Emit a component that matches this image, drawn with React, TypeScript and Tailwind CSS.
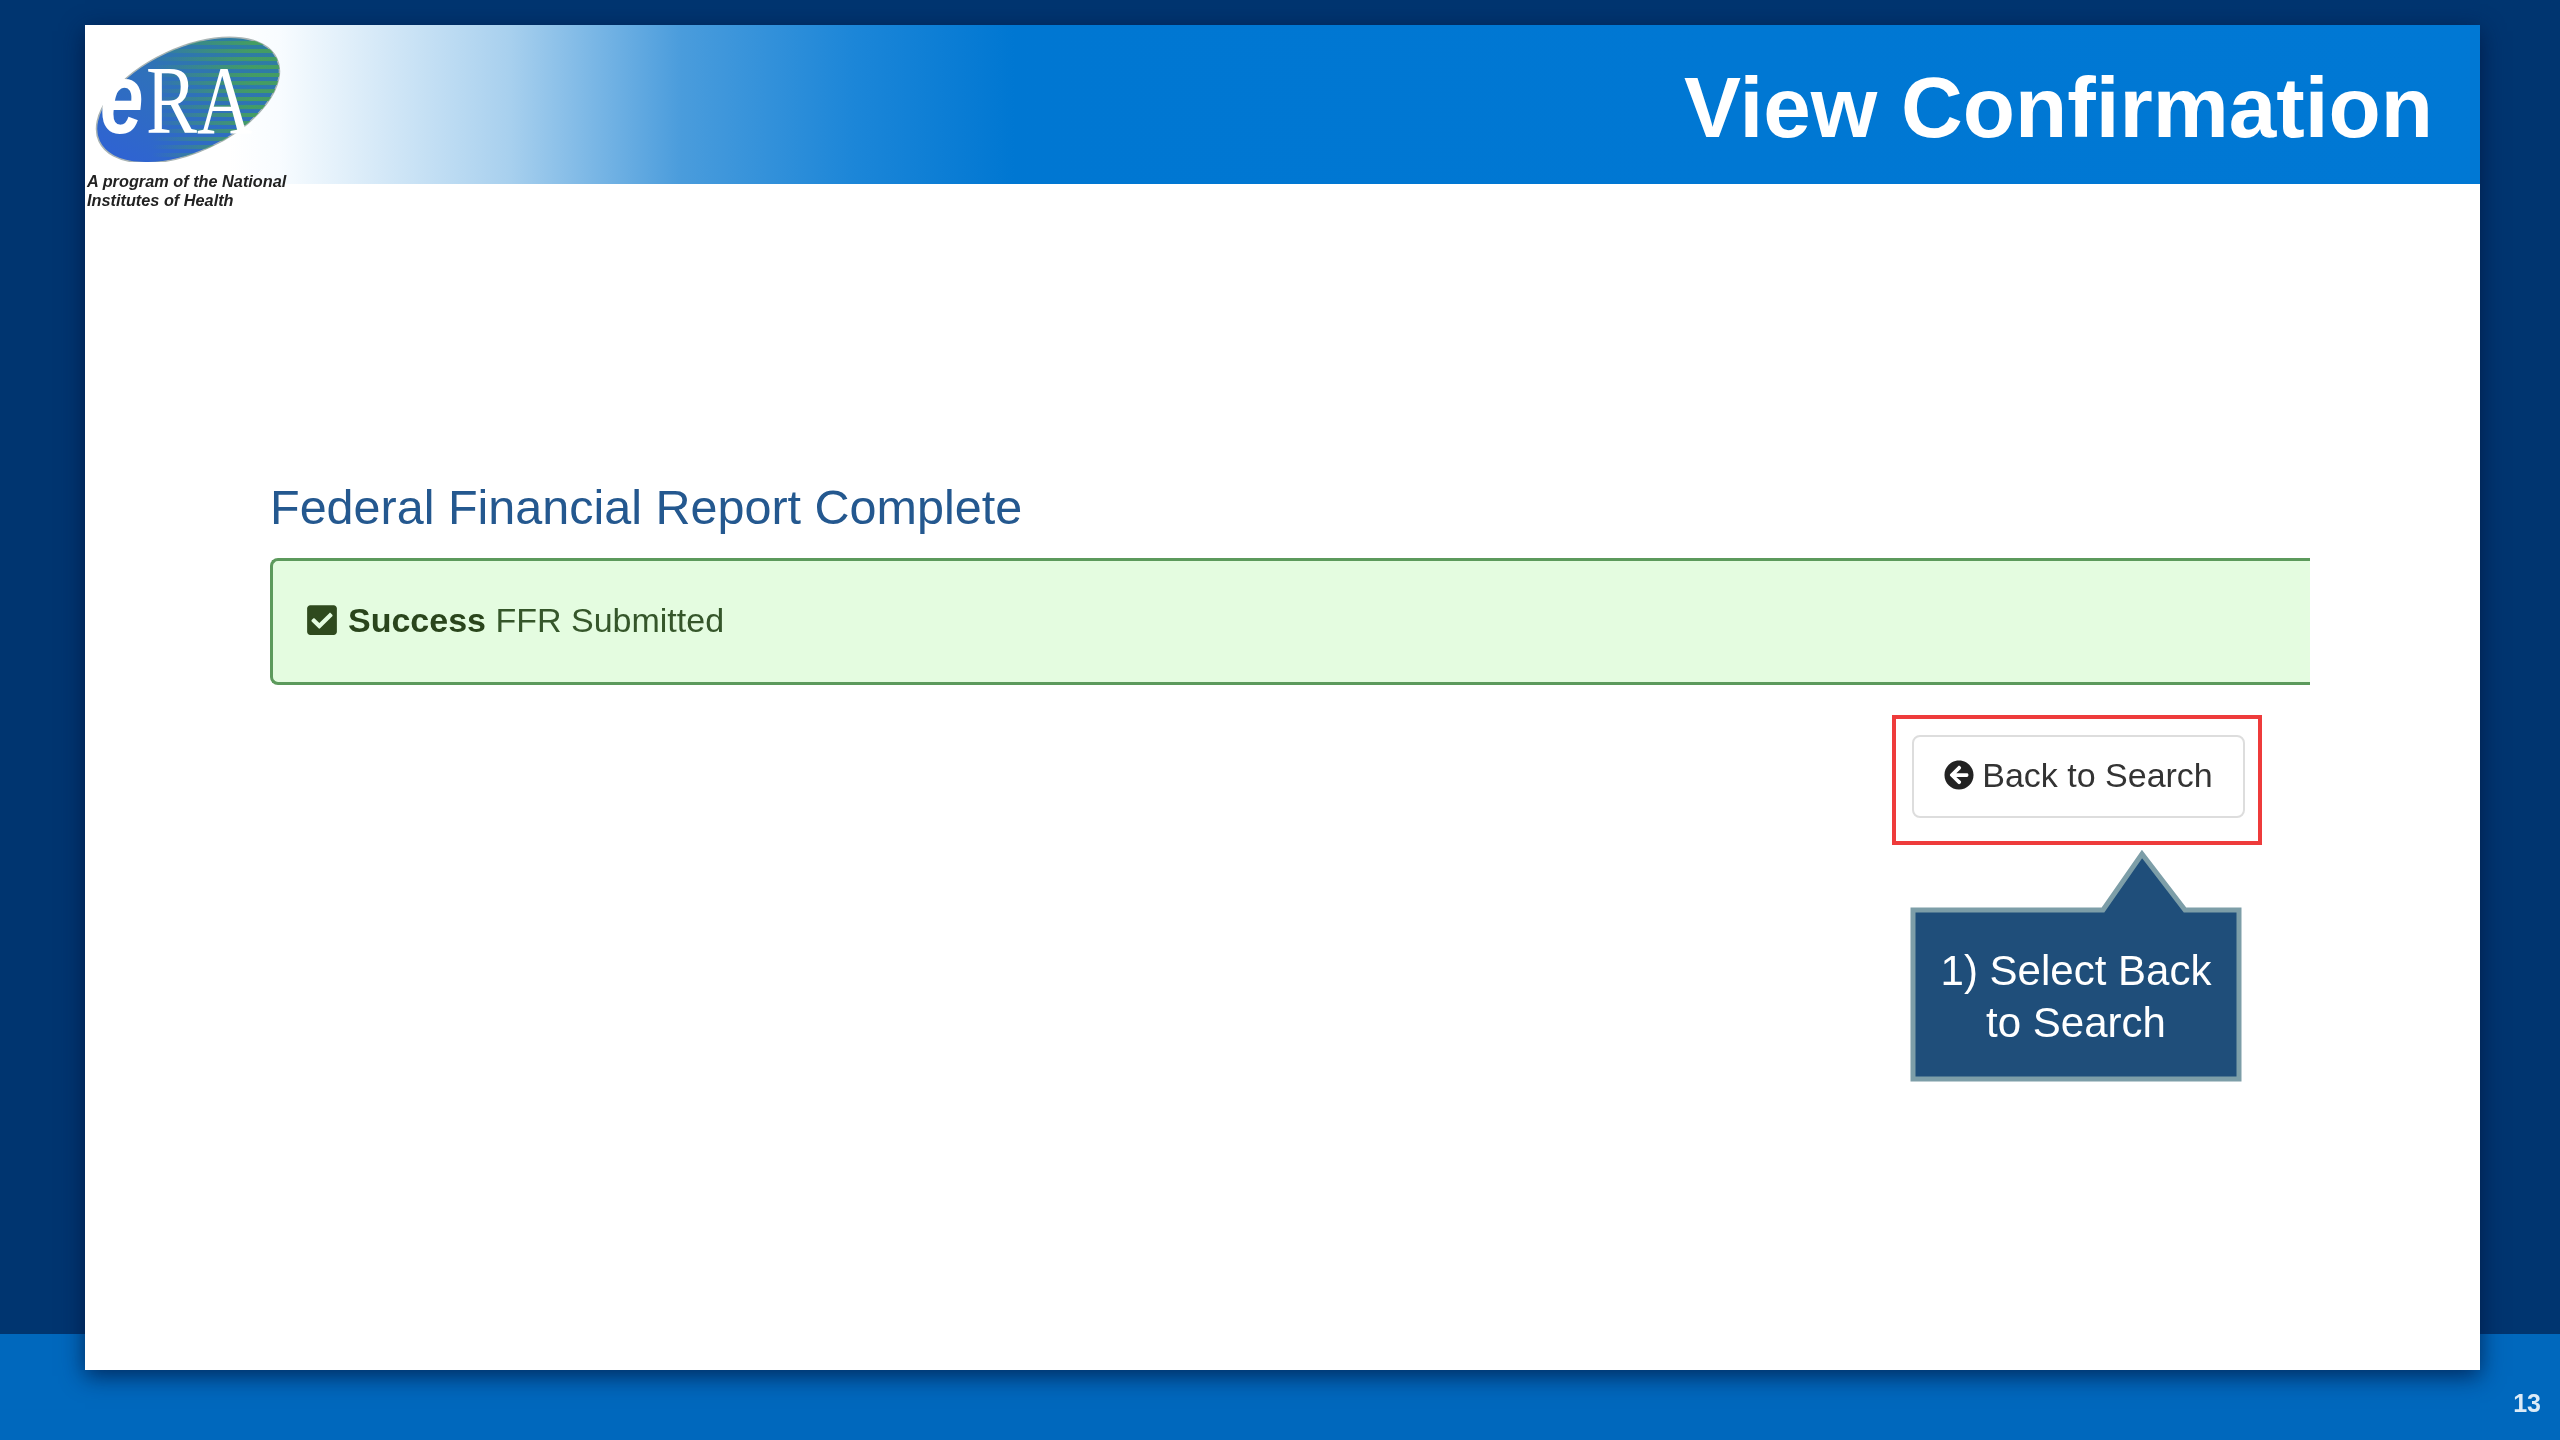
import { FaArrowCircleLeft, FaCheckSquare } from "react-icons/fa";

const stripes = Array.from({ length: 16 }, (_, i) => 14 + i * 8);

function EraLogo() {
    return (
        <svg width="200" height="135" viewBox="0 0 200 135" className="block">
            <defs>
                <linearGradient id="era-fill" x1="0" y1="0.7" x2="1" y2="0.3">
                    <stop offset="0" stopColor="#2f62d4" />
                    <stop offset="0.5" stopColor="#2f70bc" />
                    <stop offset="1" stopColor="#2f7f9c" />
                </linearGradient>
                <linearGradient id="era-stripe" gradientUnits="userSpaceOnUse" x1="60" y1="0" x2="160" y2="0">
                    <stop offset="0" stopColor="#46a05c" stopOpacity="0" />
                    <stop offset="1" stopColor="#46a05c" stopOpacity="0.9" />
                </linearGradient>
                <clipPath id="era-clip">
                    <ellipse cx="96" cy="73" rx="98" ry="52" transform="rotate(-25 96 73)" />
                </clipPath>
            </defs>
            <ellipse cx="96" cy="73" rx="98" ry="52" transform="rotate(-25 96 73)" fill="url(#era-fill)" stroke="#a9b4b4" strokeWidth="1.5" />
            <g clipPath="url(#era-clip)">
                {stripes.map((y) => (
                    <rect key={y} x="0" y={y} width="200" height="4" fill="url(#era-stripe)" />
                ))}
            </g>
            <text transform="translate(8 106) scale(0.78 1)" fill="#fff">
                <tspan fontFamily="'Liberation Sans', sans-serif" fontWeight="700" fontStyle="italic" fontSize="100">e</tspan>
                <tspan x="59" fontFamily="'Liberation Serif', serif" fontSize="98">RA</tspan>
            </text>
        </svg>
    );
}

function Callout() {
    return (
        <div className="relative w-[332px] h-[232px] ml-[18px] mt-[5px]">
            <svg width="332" height="232" viewBox="0 0 332 232" className="absolute inset-0">
                <path d="M3 60 H193 L232 4 L275 60 H329 V229 H3 Z" fill="#1f4e7a" stroke="#7d9ea8" strokeWidth="5" />
            </svg>
            <div className="relative pt-[95px] text-center text-[42px] leading-[52px] text-white">
                1) Select Back
                <br />
                to Search
            </div>
        </div>
    );
}

export default function App() {
    return (
        <div className="relative w-[2560px] h-[1440px] overflow-hidden bg-[#003570] font-['Liberation_Sans',Arial,sans-serif] blur-[0.7px]">
            {/* footer band sits behind the slide */}
            <div className="absolute inset-x-0 bottom-0 h-[106px] bg-[#0068bd]" />
            <span className="absolute right-[19px] bottom-[24px] text-[25px] font-bold leading-none text-[#dcebf7]">13</span>

            <div className="relative mx-[85px] mt-[25px] w-[2395px] h-[1345px] bg-white shadow-[0_6px_22px_rgba(0,20,60,0.75)]">
                <header className="relative flex items-center justify-end h-[159px] pr-[47px] bg-[linear-gradient(90deg,#ffffff_0%,#ffffff_6%,#f8fcff_8.1%,#a8d0ee_17.7%,#4a9cdc_24.9%,#1c86d8_32.1%,#0077d2_38.8%,#0078d4_100%)]">
                    <h1 className="text-[85.5px] font-bold leading-none text-white mt-[7px]">View Confirmation</h1>
                    <div className="absolute left-[7px] top-[2px]">
                        <EraLogo />
                    </div>
                    <div className="absolute left-[2px] top-[147px] text-[16.3px] font-bold italic leading-[19px] text-[#222]">
                        A program of the National
                        <br />
                        Institutes of Health
                    </div>
                </header>

                <main className="pl-[185px] pt-[293px] w-[2225px]">
                    <h2 className="text-[48.5px] leading-[60px] text-[#24588f]">Federal Financial Report Complete</h2>
                    <div className="flex items-center gap-[9px] h-[127px] mt-[21px] pl-[32px] pb-[3px] bg-[#e4fce0] border-[3px] border-r-0 border-[#5c9a5c] rounded-l-[8px] text-[34px] text-[#35562a]">
                        <FaCheckSquare className="text-[34px] text-[#2f4a1e]" />
                        <span>
                            <b className="text-[#2a451c]">Success</b> FFR Submitted
                        </span>
                    </div>

                    <div className="flex justify-end pr-[48px] mt-[30px]">
                        <div className="flex flex-col">
                            <div className="p-[16px] w-[370px] h-[130px] border-[4px] border-[#ee3b3b]">
                                <button className="flex items-center justify-center gap-[8px] w-[333px] h-[83px] pb-[3px] bg-white border-[2px] border-[#ddd] rounded-[8px] text-[34px] text-[#333]">
                                    <FaArrowCircleLeft className="text-[30px] text-[#222]" />
                                    Back to Search
                                </button>
                            </div>
                            <Callout />
                        </div>
                    </div>
                </main>
            </div>
        </div>
    );
}
